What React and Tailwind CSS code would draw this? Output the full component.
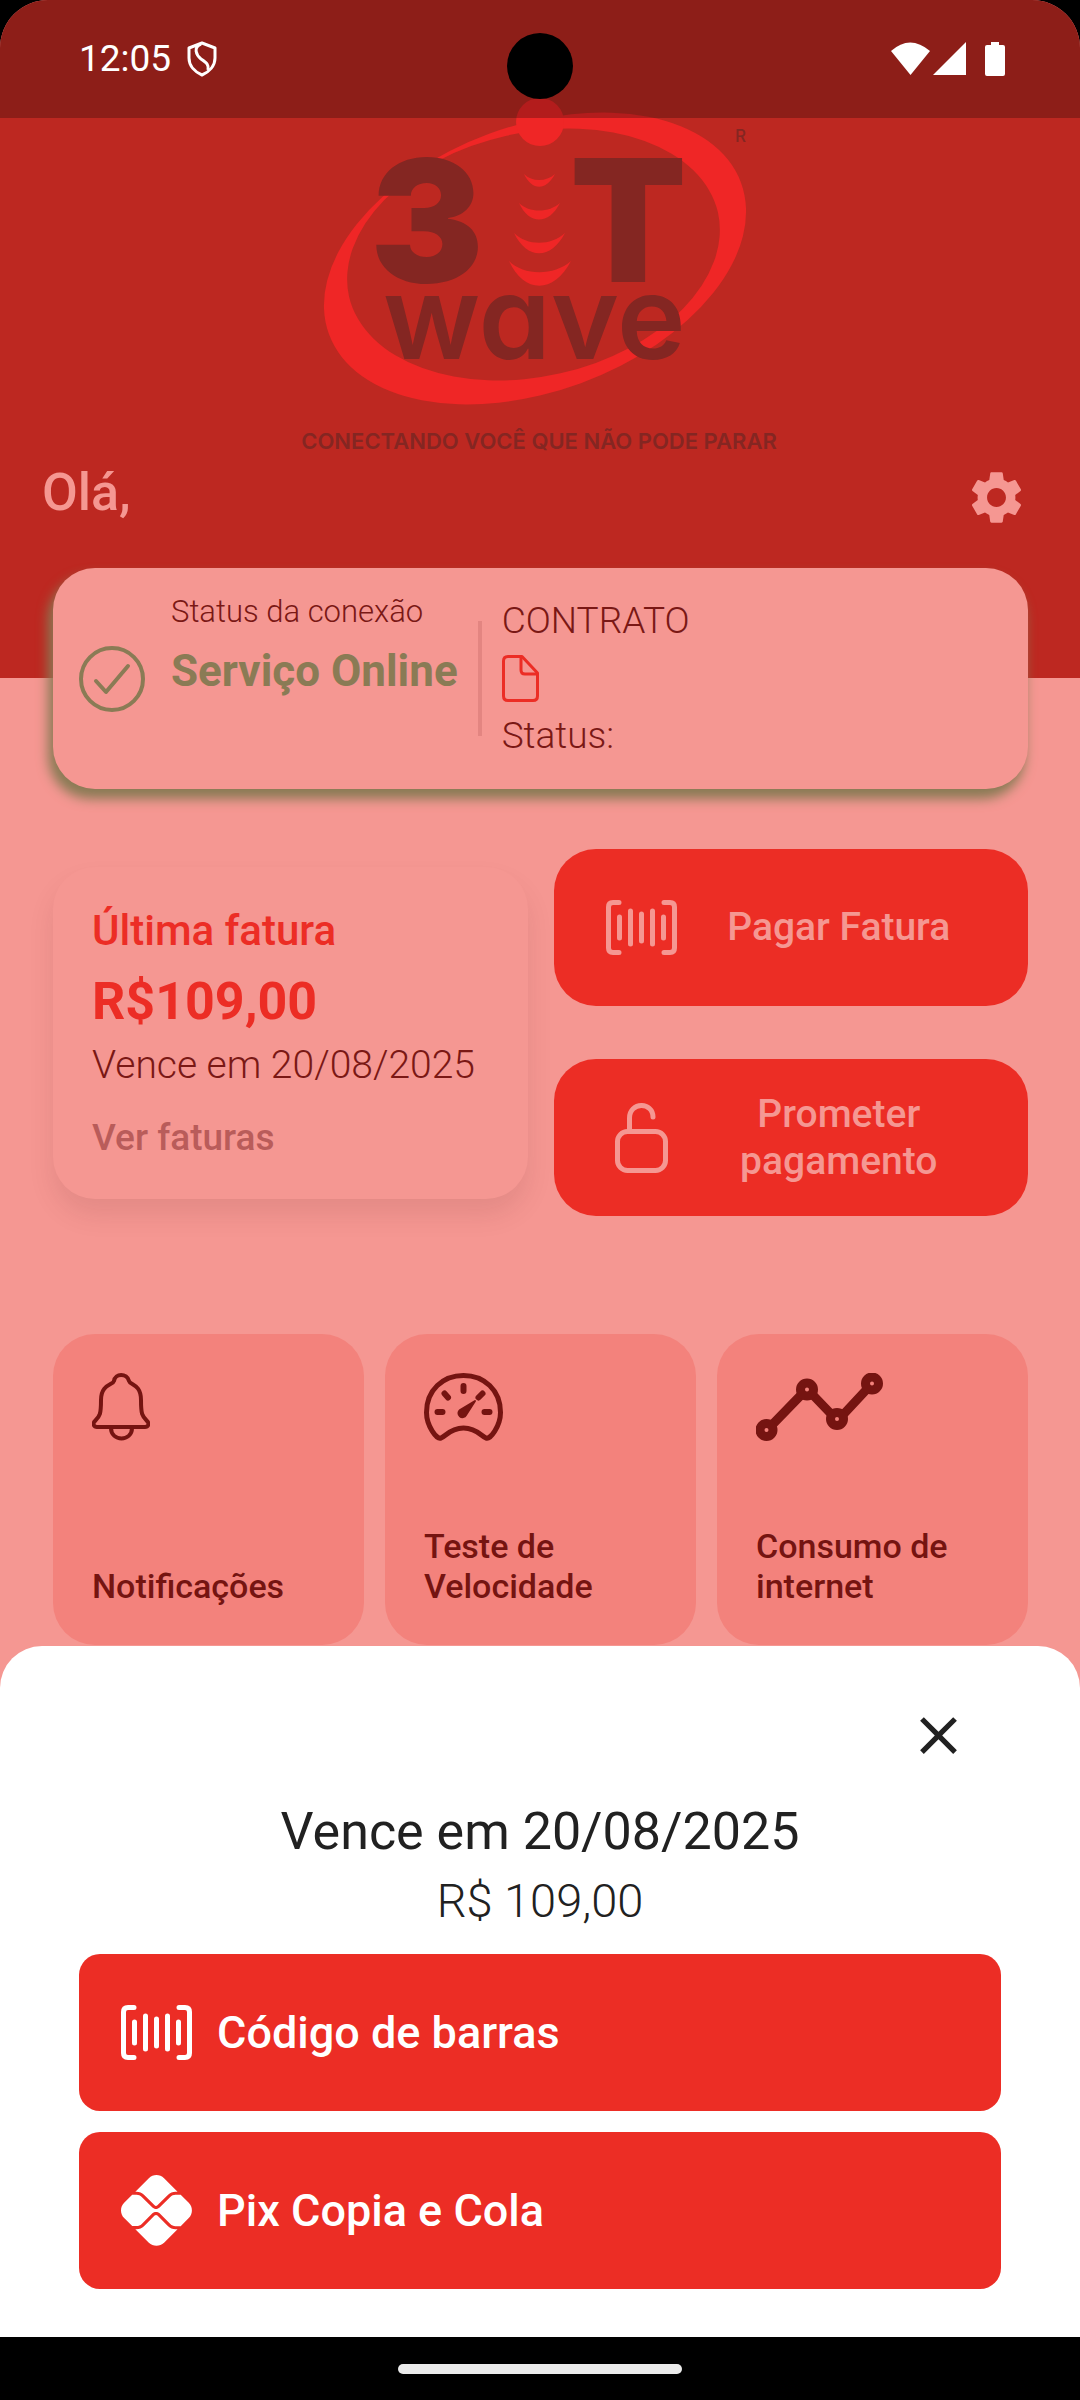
import React from 'react';
import { MdClose, MdSettings } from 'react-icons/md';
import { FaPix } from 'react-icons/fa6';

function ShieldIcon() {
  return (
    <svg width="30" height="36" viewBox="0 0 30 36" fill="none" stroke="currentColor" strokeWidth="3" strokeLinejoin="round">
      <path d="M15 2L28 7V17C28 25 22 31 15 34C8 31 2 25 2 17V7Z" />
      <path d="M14 3C6 6 9 14 14 18C20 22 22 24 21 29" />
    </svg>
  );
}

function BarcodeIcon() {
  return (
    <svg width="71" height="55" viewBox="0 0 71 55" fill="none" stroke="currentColor" strokeWidth="5" strokeLinecap="round">
      <path d="M13 2.500H7Q2.500 2.500 2.500 7V48Q2.500 52.500 7 52.500H13M58 2.500H64Q68.500 2.500 68.500 7V48Q68.500 52.500 64 52.500H58" />
      <path d="M13.500 17V38M24.500 11V44M35.500 14V41M46.500 11V44M57.500 17V38" />
    </svg>
  );
}

function UnlockIcon() {
  return (
    <svg width="53" height="70" viewBox="0 0 53 70" fill="none" stroke="currentColor" strokeWidth="5" strokeLinecap="round">
      <rect x="2.500" y="28.500" width="48" height="39" rx="10" />
      <path d="M14.500 28V15C14.500 -1.500 38 -1.500 38 14" />
    </svg>
  );
}

function CheckCircleIcon() {
  return (
    <svg width="66" height="66" viewBox="0 0 66 66" fill="none" stroke="currentColor" strokeWidth="4" strokeLinecap="round" strokeLinejoin="round">
      <circle cx="33" cy="33" r="31" />
      <path d="M17 35L27 46L49 20" />
    </svg>
  );
}

function FileIcon() {
  return (
    <svg width="37" height="47" viewBox="0 0 37 47" fill="none" stroke="currentColor" strokeWidth="3" strokeLinejoin="round">
      <path d="M6 1.500H20L35.500 18V41Q35.500 45.500 31 45.500H6Q1.500 45.500 1.500 41V6Q1.500 1.500 6 1.500Z" />
      <path d="M19 2V15Q19 19 23 19H35" />
    </svg>
  );
}

function BellIcon() {
  return (
    <svg width="58" height="68" viewBox="0 0 58 68" fill="none" stroke="currentColor" strokeWidth="4" strokeLinejoin="round">
      <path d="M22 8C23 0 35 0 37 8C38 12 49 11 49 27C49 41 50 43 55 48C58 51 56 54 53 54H5C2 54 0 51 3 48C8 43 9 41 9 27C9 11 21 12 22 8Z" />
      <path d="M19 55C19 69 40 69 40 55" />
    </svg>
  );
}

function GaugeIcon() {
  return (
    <svg width="79" height="68" viewBox="0 0 79 68" fill="none" stroke="currentColor" strokeWidth="5" strokeLinecap="round" strokeLinejoin="round">
      <path d="M17 65C21 64 26 55 39.500 55C53 55 58 64 62 65C66 67 76.500 53 76.500 39.500C76.500 17 60 2.500 39.500 2.500C19 2.500 2.500 17 2.500 39.500C2.500 53 13 67 17 65Z" />
      <path d="M39.500 13V18M20.500 20.500L24 24.500M58.500 20.500L54.500 24.500M13.500 39H18.500M60.500 39H65.500" strokeWidth="6" />
      <path d="M51 28L36 37A4 4 0 1 0 42 42Z" fill="currentColor" stroke="currentColor" strokeWidth="2" />
    </svg>
  );
}

function UsageIcon() {
  return (
    <svg width="127" height="68" viewBox="0 0 127 68" fill="none" stroke="currentColor" strokeWidth="9">
      <path d="M14 54L48 19M54 19L78 44M85 44L112 15" />
      <circle cx="10.500" cy="57" r="6.500" />
      <circle cx="51" cy="16.500" r="6.500" />
      <circle cx="81" cy="46" r="6.500" />
      <circle cx="116" cy="10.500" r="6.500" />
    </svg>
  );
}

function Logo() {
  return (
    <svg className="mx-auto" width="520" height="375" viewBox="280 90 520 375" role="img" aria-label="3iT wave">
      {/* crescent ring: two ellipses with slightly different tilt */}
      <path
        fillRule="evenodd"
        fill="#ef2626"
        d="M741 181.700A219.500 132.900 -20.200 0 0 329 333.300A219.500 132.900 -20.200 0 0 741 181.700ZM718 211.600A189.200 122.400 -12.800 0 0 349 295.400A189.200 122.400 -12.800 0 0 718 211.600Z"
      />
      <circle cx="540" cy="121" r="24" fill="#ef2626" />
      <g fill="#ef2626">
        <path d="M524 173C532 190 546 190 555 173C546 181 532 181 524 173Z" />
        <path d="M519 202C529 224 549 224 560 202C549 212 529 212 519 202Z" />
        <path d="M514 232C527 259 551 259 565 232C551 245 527 245 514 232Z" />
        <path d="M509 260C524 293 554 293 571 260C554 275 524 275 509 260Z" />
      </g>
      <g fill="#842622" className="font-['Inter',sans-serif]">
        <text x="370" y="281" fontSize="170" fontWeight="900">3</text>
        <text x="570" y="281" fontSize="170" fontWeight="900">T</text>
        <text x="383" y="358" fontSize="116" fontWeight="600" className="[font-feature-settings:'cv11']">wave</text>
        <text x="735" y="141" fontSize="17" fontWeight="500">R</text>
        <text x="539" y="448" fontSize="22" fontWeight="600" textAnchor="middle">CONECTANDO VOCÊ QUE NÃO PODE PARAR</text>
      </g>
    </svg>
  );
}

function StatusBar() {
  return (
    <div className="absolute inset-x-0 top-0 z-10 flex h-[118px] items-center justify-between bg-black/25 pl-[79px] pr-[75px] text-white">
      <div className="flex items-center gap-4">
        <span className="text-[37px] leading-[44px]">12:05</span>
        <ShieldIcon />
      </div>
      <div className="absolute left-1/2 top-[33px] size-[66px] -translate-x-1/2 rounded-full bg-black" />
      <svg width="114" height="34" viewBox="0 0 114 34" fill="currentColor">
        <path d="M0 9Q19 -8 39 9L19.500 33Z" />
        <path d="M75 0V33H42Z" />
        <path d="M100 0H108V3H112Q114 3 114 5V32Q114 34 112 34H96Q94 34 94 32V5Q94 3 96 3H100Z" />
      </svg>
    </div>
  );
}

const actions = [
  { label: 'Pagar Fatura', icon: BarcodeIcon },
  { label: 'Prometer pagamento', icon: UnlockIcon },
];

const shortcuts = [
  { label: 'Notificações', icon: BellIcon },
  { label: 'Teste de Velocidade', icon: GaugeIcon },
  { label: 'Consumo de internet', icon: UsageIcon },
];

function ConnectionCard() {
  return (
    <section className="flex min-h-[221px] items-center rounded-[42px] bg-[#f59792] pl-[26px] text-[#7a1815] shadow-[-4px_9px_12px_1px_#8a7b55]">
      <span className="text-[#8a7b55]">
        <CheckCircleIcon />
      </span>
      <div className="ml-[26px] flex flex-col gap-4 self-start pt-[25px]">
        <p className="text-[31px] font-light leading-[38px]">Status da conexão</p>
        <p className="text-[44px] font-bold leading-[48px] text-[#8a7b55]">Serviço Online</p>
      </div>
      <div className="ml-5 h-[115px] w-1 bg-[#e38581]" />
      <div className="ml-5 flex flex-col gap-3 text-[37px] font-light leading-[44px]">
        <p>CONTRATO</p>
        <span className="text-[#ec2d25]">
          <FileIcon />
        </span>
        <p>Status:</p>
      </div>
    </section>
  );
}

function InvoiceCard() {
  return (
    <article className="rounded-[42px] bg-[#f59792] p-[39px] shadow-[0_16px_26px_rgba(90,30,30,0.1)]">
      <h2 className="text-[42px] font-medium leading-[49px] text-[#ec2d25]">Última fatura</h2>
      <p className="mt-4 text-[52px] font-bold leading-[61px] text-[#ec2d25]">R$109,00</p>
      <p className="mt-[10px] whitespace-nowrap text-[39px] font-light leading-[46px] text-[#7a1815]">Vence em 20/08/2025</p>
      <a href="#faturas" className="mt-7 block text-[37px] font-medium leading-[44px] text-[#b95c5a]">Ver faturas</a>
    </article>
  );
}

function PaymentSheet() {
  return (
    <section className="mt-px rounded-t-[42px] bg-white px-[79px] pb-12 pt-[58px] text-center text-[#212121]">
      <div className="flex justify-end pr-[31px]">
        <button type="button" aria-label="Fechar">
          <MdClose size={63} />
        </button>
      </div>
      <h2 className="mt-[34px] text-[52px] leading-[61px]">Vence em 20/08/2025</h2>
      <p className="mt-3 text-[47px] font-light leading-[54px]">R$ 109,00</p>
      <div className="mt-[26px] flex flex-col gap-[21px] text-[45px] font-medium text-white">
        <button type="button" className="flex h-[157px] items-center gap-[25px] rounded-[21px] bg-[#ec2d25] pl-[42px]">
          <BarcodeIcon />
          Código de barras
        </button>
        <button type="button" className="flex h-[157px] items-center gap-[25px] rounded-[21px] bg-[#ec2d25] pl-[42px]">
          <FaPix size={71} />
          Pix Copia e Cola
        </button>
      </div>
    </section>
  );
}

export default function App() {
  return (
    <div className="flex min-h-screen flex-col bg-black font-['Roboto',sans-serif]">
      <div className="relative flex grow flex-col overflow-hidden rounded-t-[48px] bg-[#f59792]">
        <StatusBar />
        <header className="bg-[#bd2821] pb-[149px] pt-[91px]">
          <Logo />
          <div className="flex items-start justify-between pl-[42px] pr-[52px] text-[#f59792]">
            <h1 className="text-[52px] font-medium leading-[54px]">Olá,</h1>
            <button type="button" aria-label="Configurações">
              <MdSettings size={63} />
            </button>
          </div>
        </header>

        <main className="relative -mt-[110px] pl-[53px] pr-[52px]">
          <ConnectionCard />

          <div className="mt-[60px] grid grid-cols-2 items-center gap-[26px]">
            <InvoiceCard />
            <div className="flex flex-col gap-[53px]">
              {actions.map((action) => (
                <button
                  key={action.label}
                  type="button"
                  className="flex h-[157px] items-center rounded-[42px] bg-[#ec2d25] px-10 text-[39px] font-medium leading-[47px] text-[#f59792]"
                >
                  <span className="flex w-24 justify-center">
                    <action.icon />
                  </span>
                  <span className="flex-1">{action.label}</span>
                </button>
              ))}
            </div>
          </div>

          <div className="mt-[118px] grid grid-cols-3 gap-[21px]">
            {shortcuts.map((item) => (
              <button
                key={item.label}
                type="button"
                className="flex aspect-square flex-col items-start justify-between rounded-[42px] bg-[#f3827c] p-[39px] text-left text-[34px] font-medium leading-[40px] text-[#751411]"
              >
                <item.icon />
                {item.label}
              </button>
            ))}
          </div>
        </main>

        <PaymentSheet />
      </div>
      <div className="flex h-[63px] shrink-0 items-center justify-center bg-black">
        <div className="h-[10px] w-[284px] rounded-full bg-[#ebebeb]" />
      </div>
    </div>
  );
}
